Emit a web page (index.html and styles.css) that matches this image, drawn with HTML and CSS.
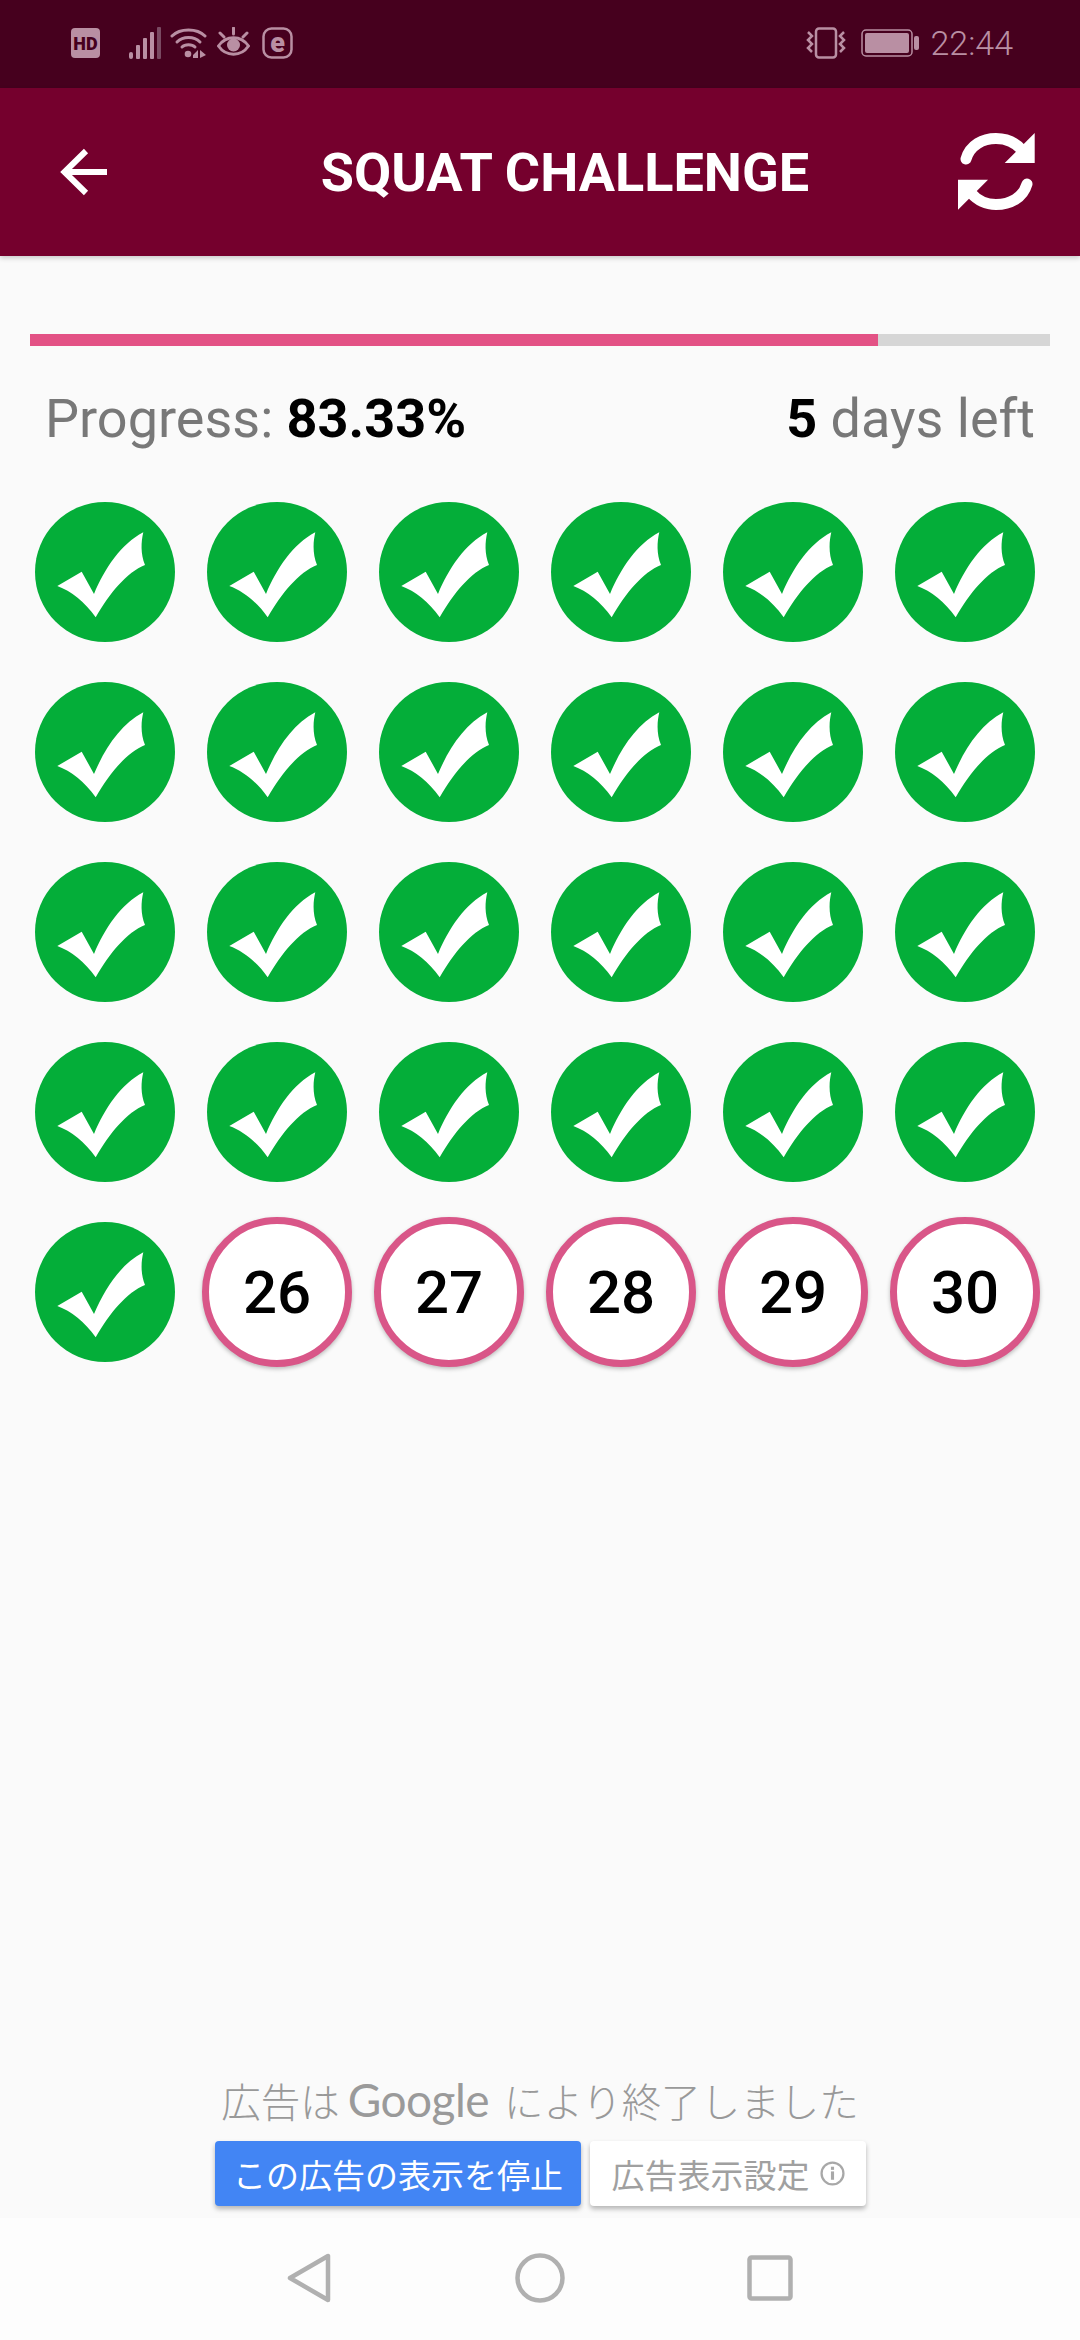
FILE: index.html
```html
<!DOCTYPE html>
<html lang="en">
<head>
<meta charset="utf-8">
<title>Squat Challenge</title>
<link rel="stylesheet" href="styles.css">
</head>
<body>
<svg class="defs" width="0" height="0" aria-hidden="true">
  <symbol id="done" viewBox="0 0 140 140">
    <circle cx="70" cy="70" r="70" fill="#04ae39"/>
    <path fill="#fff" d="M22.3 84 46.7 69.7 59 92C70 66 86 42 108.3 30.3 106 40 105.500 52 110 63 92 70 74 92 60.700 115.300 50 100 36 89 22.300 84Z"/>
  </symbol>
</svg>
<div class="screen">
  <div class="status">
    <div class="status-left">
      <svg class="ic hd" width="29" height="30" viewBox="0 0 29 30"><rect width="29" height="30" rx="4" fill="#b98fa3"/><text x="14.500" y="21.500" class="hd-text">HD</text></svg>
      <svg class="ic signal" width="32" height="32" viewBox="0 0 32 32"><g fill="#b98fa3"><rect x="0" y="25" width="4" height="7" rx="2"/><rect x="7" y="18" width="4" height="14" rx="1"/><rect x="14" y="11" width="4" height="21" rx="1"/><rect x="21" y="5" width="4" height="27" rx="1"/></g><rect x="28" y="0" width="4" height="32" rx="1" fill="#7a4a62"/></svg>
      <svg class="ic wifi" width="37" height="32" viewBox="0 0 37 32" fill="none"><g stroke="#b98fa3" stroke-width="3" stroke-linecap="round"><path d="M2 9C10 1 27 1 35 9"/><path d="M7 15C13 9 24 9 30 15"/><path d="M12 20C15 17 22 17 25 20"/></g><circle cx="18" cy="27" r="3.300" fill="#b98fa3"/><path fill="#b98fa3" d="M23 28 28 23V31H23ZM30 23 36 28 30 31Z"/></svg>
      <svg class="ic eye" width="33" height="32" viewBox="0 0 33 32" fill="none"><path stroke="#b98fa3" stroke-width="3" d="M1.500 19C9 8 24 8 31.500 19 24 30 9 30 1.500 19Z"/><circle cx="16.500" cy="18" r="6.500" fill="#b98fa3"/><path stroke="#b98fa3" stroke-width="3" stroke-linecap="round" d="M16.500 1V7M3 6 7 10M30 6 26 10"/></svg>
      <svg class="ic eset" width="31" height="32" viewBox="0 0 31 32" fill="none"><rect x="1.500" y="1.500" width="28" height="29" rx="8" stroke="#b98fa3" stroke-width="2.500"/><text x="15.500" y="24.500" class="e-text">e</text></svg>
    </div>
    <div class="status-right">
      <svg class="ic vib" width="40" height="32" viewBox="0 0 40 32" fill="none"><rect x="10" y="1.500" width="20" height="29" rx="3" stroke="#b98fa3" stroke-width="2.500"/><path stroke="#b98fa3" stroke-width="2.500" d="M2 5 6 9 2 13 6 17 2 21 6 25M38 5 34 9 38 13 34 17 38 21 34 25"/></svg>
      <svg class="ic batt" width="58" height="28" viewBox="0 0 58 28" fill="none"><rect x="1" y="1" width="50" height="26" rx="4" stroke="#b98fa3" stroke-width="1.500"/><rect x="4" y="4" width="44" height="20" rx="2" fill="#b98fa3"/><rect x="53" y="7" width="5" height="14" rx="2" fill="#b98fa3"/></svg>
      <span class="time">22:44</span>
    </div>
  </div>
  <header class="appbar">
    <svg class="back" width="50" height="50" viewBox="0 0 50 50" fill="none"><path stroke="#fff" stroke-width="6" d="M47 25H5M26 4 4.500 25 26 46"/></svg>
    <h1 class="title">SQUAT CHALLENGE</h1>
    <svg class="refresh" width="77" height="77" viewBox="0 0 77 77"><g fill="none" stroke="#fff" stroke-width="11" stroke-linecap="round"><path d="M8 26C12 12 25 5.500 38 5.500 48 5.500 57 9 64 17"/><path d="M69 51C65 65 52 71.500 38 71.500 28 71.500 20 68 13 60"/></g><path fill="#fff" d="M76.700 0V30H46.700ZM0 76.700V46.700H30Z"/></svg>
  </header>
  <main class="content">
    <div class="bar"><div class="bar-fill"></div></div>
    <div class="stats">
      <span class="stat">Progress: <b>83.33%</b></span>
      <span class="stat"><b>5</b> days left</span>
    </div>
    <div class="grid">
      <div class="cell"><svg class="done"><use href="#done"/></svg></div>
      <div class="cell"><svg class="done"><use href="#done"/></svg></div>
      <div class="cell"><svg class="done"><use href="#done"/></svg></div>
      <div class="cell"><svg class="done"><use href="#done"/></svg></div>
      <div class="cell"><svg class="done"><use href="#done"/></svg></div>
      <div class="cell"><svg class="done"><use href="#done"/></svg></div>
      <div class="cell"><svg class="done"><use href="#done"/></svg></div>
      <div class="cell"><svg class="done"><use href="#done"/></svg></div>
      <div class="cell"><svg class="done"><use href="#done"/></svg></div>
      <div class="cell"><svg class="done"><use href="#done"/></svg></div>
      <div class="cell"><svg class="done"><use href="#done"/></svg></div>
      <div class="cell"><svg class="done"><use href="#done"/></svg></div>
      <div class="cell"><svg class="done"><use href="#done"/></svg></div>
      <div class="cell"><svg class="done"><use href="#done"/></svg></div>
      <div class="cell"><svg class="done"><use href="#done"/></svg></div>
      <div class="cell"><svg class="done"><use href="#done"/></svg></div>
      <div class="cell"><svg class="done"><use href="#done"/></svg></div>
      <div class="cell"><svg class="done"><use href="#done"/></svg></div>
      <div class="cell"><svg class="done"><use href="#done"/></svg></div>
      <div class="cell"><svg class="done"><use href="#done"/></svg></div>
      <div class="cell"><svg class="done"><use href="#done"/></svg></div>
      <div class="cell"><svg class="done"><use href="#done"/></svg></div>
      <div class="cell"><svg class="done"><use href="#done"/></svg></div>
      <div class="cell"><svg class="done"><use href="#done"/></svg></div>
      <div class="cell"><svg class="done"><use href="#done"/></svg></div>
      <div class="cell"><div class="day">26</div></div>
      <div class="cell"><div class="day">27</div></div>
      <div class="cell"><div class="day">28</div></div>
      <div class="cell"><div class="day">29</div></div>
      <div class="cell"><div class="day">30</div></div>
    </div>
  </main>
  <section class="ad">
    <p class="ad-line">広告は<span class="google">Google</span>により終了しました</p>
    <div class="ad-buttons">
      <span class="ad-btn stop">この広告の表示を停止</span>
      <span class="ad-btn prefs">広告表示設定
        <svg class="info" width="25" height="25" viewBox="0 0 24 24" fill="none"><circle cx="12" cy="12" r="10.500" stroke="#a8a8a8" stroke-width="2.200"/><rect x="10.500" y="10" width="3" height="8" fill="#a8a8a8"/><rect x="10.500" y="5.500" width="3" height="3" fill="#a8a8a8"/></svg>
      </span>
    </div>
  </section>
  <nav class="navbar">
    <svg width="44" height="50" viewBox="0 0 44 50" fill="none"><path stroke="#b0b0b0" stroke-width="4.500" stroke-linejoin="round" d="M41 3V47L3 25Z"/></svg>
    <svg width="50" height="50" viewBox="0 0 50 50" fill="none"><circle cx="25" cy="25" r="22.500" stroke="#b0b0b0" stroke-width="4.500"/></svg>
    <svg width="46" height="46" viewBox="0 0 46 46" fill="none"><rect x="2.500" y="2.500" width="41" height="41" rx="2" stroke="#b0b0b0" stroke-width="4.500"/></svg>
  </nav>
</div>
</body>
</html>
```

FILE: styles.css
```css
* { box-sizing: border-box; }
html, body { margin: 0; padding: 0; }
body { font-family: Roboto, "Noto Sans CJK JP", sans-serif; background: #fafafa; }
.defs { display: block; height: 0; }
.screen { width: 1080px; height: 2340px; display: flex; flex-direction: column; overflow: hidden; }

.status { height: 88px; flex: none; background: #46001e; display: flex; align-items: center; justify-content: space-between; padding: 0 67px 2px 71px; }
.status-left, .status-right { display: flex; align-items: center; }
.status-left { gap: 9px; }
.status-right { gap: 11px; }
.ic { display: block; flex: none; }
.hd { margin-right: 20px; }
.eye { margin-left: 1px; }
.eset { margin-left: 3px; }
.hd-text { font: 900 18px Roboto, sans-serif; fill: #46001e; text-anchor: middle; }
.e-text { font: 900 27px Roboto, sans-serif; fill: #b98fa3; text-anchor: middle; }
.vib { margin-right: 4px; }
.time { font-size: 34px; font-weight: 300; color: #b98fa3; }

.appbar { height: 168px; flex: none; background: #75002d; display: flex; align-items: center; padding: 0 45px 0 60px; box-shadow: 0 2px 5px rgba(0,0,0,.2); position: relative; }
.back { flex: none; }
.title { flex: 1; margin: 0; text-align: center; color: #fff; font-size: 54px; font-weight: 700; padding-left: 62px; }
.refresh { flex: none; margin-bottom: 1px; }

.content { flex: 1; padding: 78px 30px 0; min-height: 0; }
.bar { height: 12px; background: #d6d6d6; }
.bar-fill { width: 83.1%; height: 100%; background: #e35285; }
.stats { display: flex; justify-content: space-between; padding: 0 15px; margin-top: 42px; font-size: 54px; line-height: 62px; color: #787878; }
.stat b { color: #000; font-weight: 700; }
.grid { display: grid; grid-template-columns: repeat(6, 172px); grid-auto-rows: 180px; margin: 32px 0 0 -11px; }
.cell { display: flex; align-items: center; justify-content: center; }
.done { width: 140px; height: 140px; display: block; }
.day { width: 150px; height: 150px; border-radius: 50%; background: #fff; border: 7px solid #d95688; box-shadow: 0 2px 4px rgba(0,0,0,.25); display: flex; align-items: center; justify-content: center; font-size: 60px; font-weight: 500; color: #000; }

.ad { flex: none; display: flex; flex-direction: column; align-items: center; background: #fafafa; height: 140px; }
.ad-line { margin: 0; height: 63px; padding-bottom: 21px; display: flex; align-items: center; white-space: pre; font-size: 39.5px; font-weight: 300; color: #999; }
.google { font-family: Lato, sans-serif; font-size: 46px; font-weight: 400; color: #9a9a9a; letter-spacing: -0.5px; margin: 0 15px 0 8px; }
.ad-buttons { display: flex; gap: 9px; padding-left: 1px; }
.ad-btn { height: 65px; border-radius: 4px; display: flex; align-items: center; justify-content: center; font-size: 33px; box-shadow: 0 3px 5px rgba(0,0,0,.28); }
.stop { width: 366px; background: #4285f4; color: #fff; }
.prefs { width: 276px; background: #fff; color: #a0a0a0; gap: 10px; }
.info { display: block; }

.navbar { height: 122px; flex: none; background: #fdfdfd; display: flex; align-items: center; justify-content: center; padding: 0 0 2px; }
.navbar svg { display: block; flex: none; }
.navbar svg:nth-child(1) { margin-right: 184px; }
.navbar svg:nth-child(2) { margin-right: 182px; }
```
